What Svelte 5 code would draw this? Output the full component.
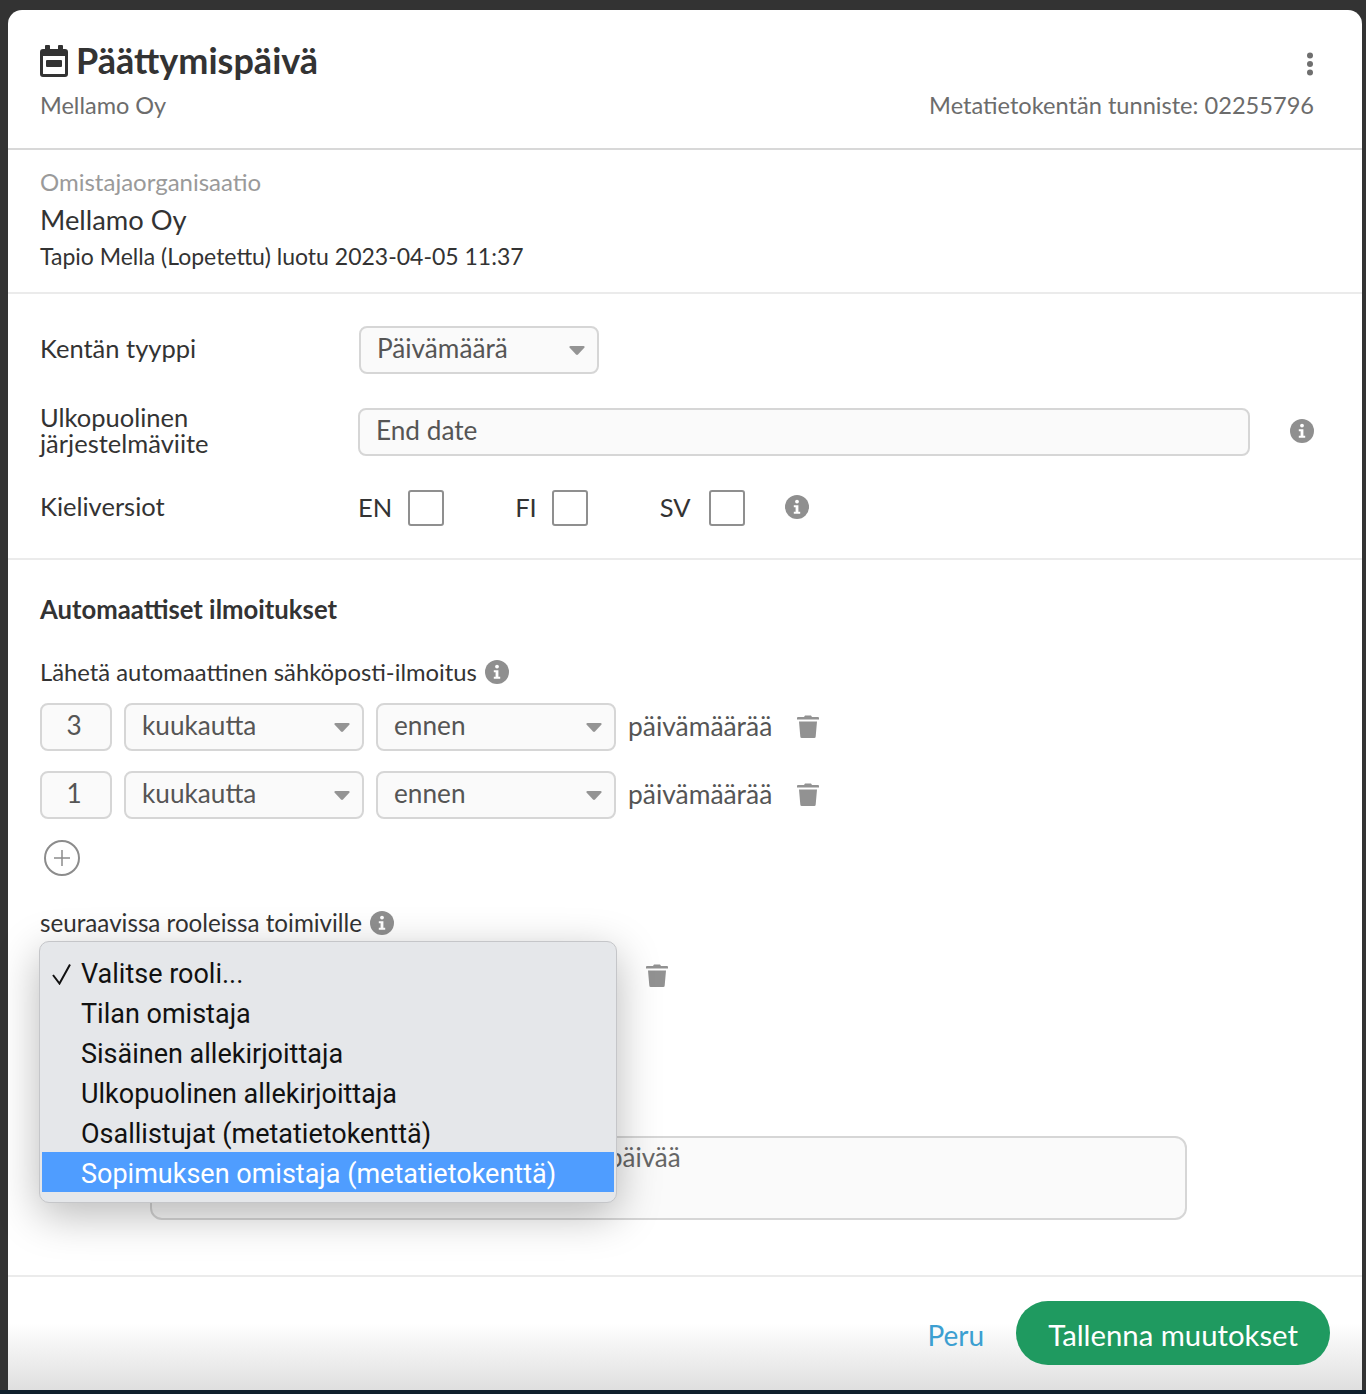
<script>
  const rows = ['3', '1'];
  const roles = ['Valitse rooli...', 'Tilan omistaja', 'Sisäinen allekirjoittaja', 'Ulkopuolinen allekirjoittaja', 'Osallistujat (metatietokenttä)', 'Sopimuksen omistaja (metatietokenttä)'];
</script>

{#snippet info()}
  <svg class="info" viewBox="0 0 24 24" width="24" height="24"><circle cx="12" cy="12" r="12" fill="#8f8f8f"/><circle cx="12" cy="6.6" r="1.9" fill="#fff"/><path d="M8.8 10.2h4.6v6.6h1.8v2H8.8v-2h1.8v-4.600h-1.800z" fill="#fff"/></svg>
{/snippet}
{#snippet trash()}
  <svg class="trash" viewBox="0 0 22 24" width="22" height="24"><path d="M8 1.500h6l1 1.500h6a1 1 0 0 1 1 1v1.500H0V4a1 1 0 0 1 1-1h6z" fill="#929292"/><path d="M2 7.500h18l-1.300 15a1.500 1.500 0 0 1-1.500 1.500H4.800a1.500 1.500 0 0 1-1.500-1.500z" fill="#929292"/></svg>
{/snippet}
{#snippet caret()}
  <svg class="caret" viewBox="0 0 16 10" width="16" height="10"><path d="M1.500 0h13c1 0 1.500 1 .8 1.800L9 8.600c-.6.600-1.400.600-2 0L.7 1.800C0 1 .5 0 1.500 0z" fill="#949494"/></svg>
{/snippet}

<div class="screen">
  <div class="card">
    <header class="head">
      <div class="head-top">
        <h1>
          <svg class="cal" viewBox="0 0 28 32" width="28" height="32"><path d="M6 0h3a1 1 0 0 1 1 1v3h8V1a1 1 0 0 1 1-1h3a1 1 0 0 1 1 1v3h2a3 3 0 0 1 3 3v22a3 3 0 0 1-3 3H3a3 3 0 0 1-3-3V7a3 3 0 0 1 3-3h2V1a1 1 0 0 1 1-1zM3 11v17.500a.5.5 0 0 0 .5.5h21a.5.5 0 0 0 .5-.5V11z" fill="#333"/><rect x="6" y="15" width="16" height="7" rx="1" fill="#333"/></svg>
          Päättymispäivä
        </h1>
        <svg class="dots" viewBox="0 0 8 24" width="8" height="24"><circle cx="4" cy="3.500" r="3" fill="#6f6f6f"/><circle cx="4" cy="12" r="3" fill="#6f6f6f"/><circle cx="4" cy="20.500" r="3" fill="#6f6f6f"/></svg>
      </div>
      <div class="head-sub"><span>Mellamo Oy</span><span class="mid">Metatietokentän tunniste: 02255796</span></div>
    </header>

    <section class="owner">
      <div class="muted">Omistajaorganisaatio</div>
      <div class="org">Mellamo Oy</div>
      <div class="created">Tapio Mella (Lopetettu) luotu 2023-04-05 11:37</div>
    </section>

    <section class="fields">
      <div class="field f1">
        <div class="lab">Kentän tyyppi</div>
        <div class="box sel type">Päivämäärä{@render caret()}</div>
      </div>
      <div class="field f2">
        <div class="lab two">Ulkopuolinen<br />järjestelmäviite</div>
        <div class="box ext">End date</div>
        {@render info()}
      </div>
      <div class="field f3">
        <div class="lab">Kieliversiot</div>
        <div class="langs">
          <span class="lang en">EN<i class="chk"></i></span>
          <span class="lang fi">FI<i class="chk"></i></span>
          <span class="lang sv">SV<i class="chk"></i></span>
          {@render info()}
        </div>
      </div>
    </section>

    <section class="auto">
      <h2>Automaattiset ilmoitukset</h2>
      <div class="hint send">Lähetä automaattinen sähköposti-ilmoitus {@render info()}</div>
      {#each rows as n}
        <div class="row">
          <div class="box num">{n}</div>
          <div class="box sel unit">kuukautta{@render caret()}</div>
          <div class="box sel unit">ennen{@render caret()}</div>
          <span class="after">päivämäärää</span>
          {@render trash()}
        </div>
      {/each}
      <svg class="plus" viewBox="0 0 36 36" width="36" height="36"><circle cx="18" cy="18" r="17" fill="none" stroke="#8c8c8c" stroke-width="2"/><path d="M18 10v16M10 18h16" stroke="#8c8c8c" stroke-width="1.500" fill="none"/></svg>
      <div class="hint roles">seuraavissa rooleissa toimiville {@render info()}</div>
      <div class="role-trash">{@render trash()}</div>
      <div class="note">päivää</div>
      <div class="menu">
        {#each roles as r, i}
          <div class="opt" class:on={i === 5}>
            {#if i === 0}<svg class="tick" viewBox="0 0 20 22" width="20" height="22"><path d="M2 12l6.500 8.500L19 1.500" fill="none" stroke="#111" stroke-width="2"/></svg>{/if}
            {r}
          </div>
        {/each}
      </div>
    </section>

    <footer class="foot">
      <span class="cancel">Peru</span>
      <span class="save">Tallenna muutokset</span>
    </footer>
  </div>
</div>

<style>
  :global(body) { margin: 0; background: #10202c; }
  .screen {
    height: 1390px; padding: 10px 4px 0 8px; box-sizing: border-box; background: #333;
    font-family: Lato, "Liberation Sans", sans-serif; color: #333; overflow: hidden;
    width: 1366px; margin-bottom: 4px;
  }
  .card { background: #fff; height: 1380px; border-radius: 14px 14px 0 0; display: flex; flex-direction: column; }
  .head { height: 140px; border-bottom: 2px solid #d8d8d8; padding: 0 48px 0 32px; box-sizing: border-box; flex: none; }
  .head-top { display: flex; justify-content: space-between; align-items: center; padding-top: 29px; height: 42px; box-sizing: content-box; }
  h1 { margin: 0; font-size: 36px; font-weight: 700; display: flex; align-items: center; gap: 8px; line-height: 42px; color: #333; }
  .cal { margin-top: 2px; }
  .dots { margin-top: 8px; }
  .head-sub { display: flex; justify-content: space-between; font-size: 23.5px; color: #6c6c6c; margin-top: 9px; line-height: 30px; }
  .mid { font-size: 23.6px; }
  .owner { height: 144px; box-sizing: border-box; border-bottom: 2px solid #ebebeb; padding: 18px 32px 0; flex: none; }
  .muted { color: #9a9a9a; font-size: 24px; line-height: 28px; }
  .org { font-size: 27.3px; line-height: 32px; margin-top: 8px; }
  .created { font-size: 23px; line-height: 28px; margin-top: 6px; }
  .fields { height: 266px; box-sizing: border-box; border-bottom: 2px solid #ebebeb; padding: 32px 48px 0 32px; flex: none; }
  .field { display: flex; align-items: center; }
  .lab { width: 318px; font-size: 25.5px; line-height: 26px; flex: none; }
  .f1 .lab { margin-bottom: 5px; }
  .two { margin-bottom: 4px; }
  .f2 { margin-top: 34px; height: 48px; }
  .f2 .info { margin-bottom: 2px; }
  .f3 { margin-top: 32px; }
  .f3 .lab { margin-bottom: 2px; }
  .box { box-sizing: border-box; height: 48px; border: 2px solid #d6d6d6; border-radius: 8px; background: #fafafa; color: #555; font-size: 26.2px; line-height: 40px; padding: 0 16px; position: relative; }
  .type { width: 240px; margin-left: 1px; }
  .ext { flex: 1; margin-right: 40px; }
  .caret { position: absolute; right: 12px; top: 18px; }
  .langs { display: flex; align-items: center; font-size: 25.5px; }
  .lang { display: flex; align-items: center; gap: 16px; }
  .fi { margin-left: 71px; gap: 15px; }
  .sv { margin-left: 72px; gap: 18px; }
  .chk { display: block; width: 36px; height: 36px; box-sizing: border-box; border: 2px solid #8f8f8f; border-radius: 3px; margin-top: 2px; }
  .langs .info { margin-left: 40px; }
  .auto { position: relative; height: 717px; box-sizing: border-box; border-bottom: 2px solid #ebebeb; padding: 34px 32px 0; flex: none; }
  h2 { margin: 0; font-size: 25.7px; line-height: 30px; font-weight: 700; color: #333; }
  .hint { display: flex; align-items: center; gap: 8px; font-size: 23.8px; line-height: 28px; }
  .send { margin-top: 34px; }
  .row { display: flex; align-items: center; gap: 12px; margin-top: 20px; }
  .send + .row { margin-top: 17px; }
  .num { width: 72px; text-align: center; padding: 0 4px 0 0; }
  .unit { width: 240px; }
  .after { font-size: 26.4px; color: #555; padding-bottom: 3px; }
  .trash { margin: 0 0 2px 13px; }
  .plus { display: block; margin: 21px 0 0 4px; }
  .roles { margin-top: 33px; font-size: 24.2px; }
  .role-trash { position: absolute; left: 625px; top: 403px; line-height: 0; }
  .note { position: absolute; left: 142px; top: 576px; width: 1037px; height: 84px; box-sizing: border-box; border: 2px solid #d6d6d6; border-radius: 12px; background: #fafafa; padding: 3px 0 0 456px; font-size: 26px; color: #666; line-height: 32px; }
  .menu { position: absolute; left: 31px; top: 381px; width: 578px; height: 262px; box-sizing: border-box; padding: 10px 2px; background: #e5e7ea; border: 1px solid #c5c6c9; border-radius: 10px; box-shadow: 0 12px 44px rgba(0,0,0,.28); z-index: 2; }
  .opt { height: 40px; line-height: 44px; padding-left: 39px; font-family: Roboto, sans-serif; font-size: 27px; color: #111; position: relative; }
  .opt.on { background: #4f9dff; color: #fff; }
  .tick { position: absolute; left: 9px; top: 11px; }
  .foot { flex: 1; display: flex; justify-content: flex-end; align-items: center; padding: 0 32px 2px 0; gap: 32px; background: linear-gradient(#fff 0, #fff 46px, #dfdfdf 100%); }
  .cancel { color: #3c9fd1; font-size: 28px; padding-top: 4px; }
  .save { background: #1f9a60; color: #fff; height: 64px; line-height: 68px; border-radius: 32px; padding: 0 32px; font-size: 29.3px; }
</style>
